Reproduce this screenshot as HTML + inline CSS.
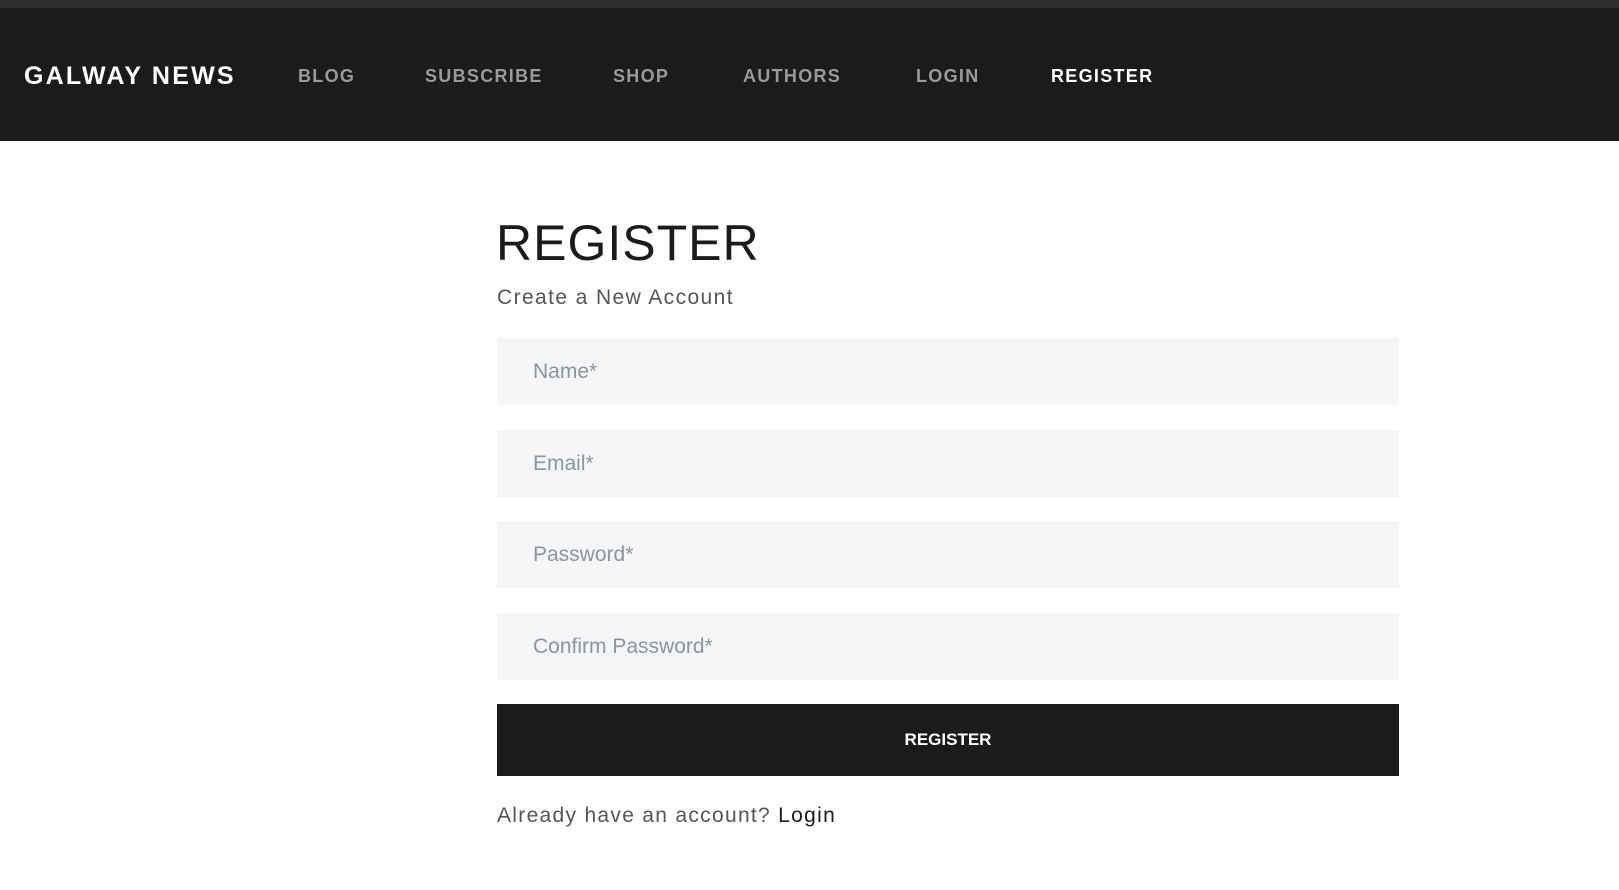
<!DOCTYPE html>
<html><head><meta charset="utf-8"><style>
*{margin:0;padding:0;box-sizing:border-box}
body{width:1619px;height:890px;background:#fff;font-family:"Liberation Sans",sans-serif;overflow:hidden;position:relative}
.top{position:absolute;left:0;top:0;width:1619px;height:8px;background:#2e2e2e}
.nav{position:absolute;left:0;top:8px;width:1619px;height:133px;background:#1b1b1b}
.nav span{position:absolute;top:58px;font-size:18px;letter-spacing:1.3px;color:#9a9a9a;font-weight:bold}
.nav .logo{left:24px;top:54px;font-size:25px;color:#fff;font-weight:bold;letter-spacing:2.2px}
.ab{position:absolute}
.in{position:absolute;left:497px;width:902px;height:67px;background:#f5f6f8;color:#8e949b;font-size:21px;padding-left:36px;line-height:67px}
</style></head><body>
<div class="top"></div>
<div class="nav">
<span class="logo">GALWAY NEWS</span>
<span style="left:298px">BLOG</span>
<span style="left:425px">SUBSCRIBE</span>
<span style="left:613px">SHOP</span>
<span style="left:743px">AUTHORS</span>
<span style="left:916px">LOGIN</span>
<span style="left:1051px;color:#fff">REGISTER</span>
</div>
<div class="ab" style="left:496px;top:214px;font-size:50px;letter-spacing:1px;color:#1b1b1b">REGISTER</div>
<div class="ab" style="left:497px;top:286px;font-size:21px;letter-spacing:1.4px;color:#555">Create a New Account</div>
<div class="in" style="top:338px">Name*</div>
<div class="in" style="top:430px">Email*</div>
<div class="in" style="top:521px">Password*</div>
<div class="in" style="top:613px">Confirm Password*</div>
<div class="ab" style="left:497px;top:704px;width:902px;height:72px;background:#1b1b1b;color:#fff;font-size:17px;font-weight:bold;text-align:center;line-height:72px">REGISTER</div>
<div class="ab" style="left:497px;top:804px;font-size:21px;letter-spacing:1.3px;color:#555">Already have an account? <span style="color:#1b1b1b">Login</span></div>
</body></html>
